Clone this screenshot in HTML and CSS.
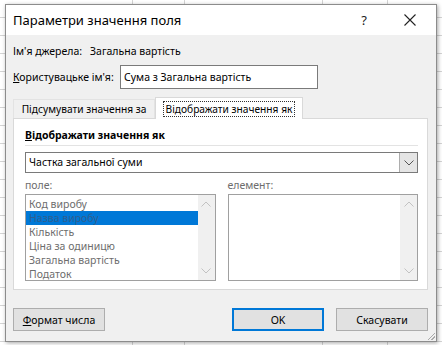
FILE: index.html
```html
<!DOCTYPE html>
<html lang="uk">
<head>
  <meta charset="UTF-8">
  <title>Параметри значення поля</title>
  <link rel="stylesheet" href="styles.css">
</head>
<body>
  <div class="dialog">
    <!-- Title bar -->
    <div class="titlebar">
      <span class="title">Параметри значення поля</span>
      <span class="help">?</span>
      <span class="close">
        <svg width="12" height="12" viewBox="0 0 12 12"><path d="M0.5 0.5 L11.5 11.5 M11.5 0.5 L0.5 11.5" stroke="#222" stroke-width="1.1" fill="none"/></svg>
      </span>
    </div>

    <div class="content">
      <div class="row source">
        <span class="label-src">Ім'я джерела:</span>
        <span>Загальна вартість</span>
      </div>

      <div class="row name">
        <span class="label-name"><u>К</u>ористувацьке ім'я:</span>
        <div class="textbox">Сума з Загальна вартість</div>
      </div>

      <!-- Tabs -->
      <div class="tabs">
        <div class="tab">Підсумувати значення за</div>
        <div class="tab active"><span class="focus">Відображати значення як</span></div>
      </div>

      <div class="panel">
        <div class="heading"><u>В</u>ідображати значення як</div>
        <div class="dropdown">
          <span class="dd-text">Частка загальної суми</span>
          <span class="dd-arrow">
            <svg width="10" height="6" viewBox="0 0 10 6"><path d="M0.5 0.5 L5 5 L9.5 0.5" stroke="#555" stroke-width="1" fill="none"/></svg>
          </span>
        </div>

        <div class="lists">
          <div class="col">
            <div class="caption">поле:</div>
            <div class="listbox">
              <div class="items">
                <div class="item">Код виробу</div>
                <div class="item selected">Назва виробу</div>
                <div class="item">Кількість</div>
                <div class="item">Ціна за одиницю</div>
                <div class="item">Загальна вартість</div>
                <div class="item">Податок</div>
              </div>
              <div class="scrollbar">
                <svg width="10" height="6" viewBox="0 0 10 6"><path d="M0.5 5.5 L5 1 L9.5 5.5" stroke="#c2c2c2" stroke-width="1" fill="none"/></svg>
                <svg width="10" height="6" viewBox="0 0 10 6"><path d="M0.5 0.5 L5 5 L9.5 0.5" stroke="#c2c2c2" stroke-width="1" fill="none"/></svg>
              </div>
            </div>
          </div>
          <div class="col">
            <div class="caption">елемент:</div>
            <div class="listbox">
              <div class="items"></div>
              <div class="scrollbar">
                <svg width="10" height="6" viewBox="0 0 10 6"><path d="M0.5 5.5 L5 1 L9.5 5.5" stroke="#c2c2c2" stroke-width="1" fill="none"/></svg>
                <svg width="10" height="6" viewBox="0 0 10 6"><path d="M0.5 0.5 L5 5 L9.5 0.5" stroke="#c2c2c2" stroke-width="1" fill="none"/></svg>
              </div>
            </div>
          </div>
        </div>
      </div>

      <!-- Buttons -->
      <div class="buttons">
        <button class="btn"><u>Ф</u>ормат числа</button>
        <span class="spacer"></span>
        <button class="btn ok">OK</button>
        <button class="btn">Скасувати</button>
      </div>
    </div>
    <span class="grip"></span>
  </div>
</body>
</html>
```

FILE: styles.css
```css
html, body {
  margin: 0;
  width: 442px;
  height: 345px;
  overflow: hidden;
}

body {
  font-family: "Noto Sans", "Open Sans", sans-serif;
  font-size: 10.5px;
  color: #000;
  background-color: #fff;
  background-image:
    linear-gradient(to right, transparent 132px, #d4d4d4 132px, #d4d4d4 133px, transparent 133px,
      transparent 184px, #d4d4d4 184px, #d4d4d4 185px, transparent 185px,
      transparent 322px, #d4d4d4 322px, #d4d4d4 323px, transparent 323px,
      transparent 387px, #d4d4d4 387px, #d4d4d4 388px, transparent 388px),
    repeating-linear-gradient(to bottom, transparent 0, transparent 17px, #d4d4d4 17px, #d4d4d4 18px);
  padding-top: 4px;
  box-sizing: border-box;
}

.dialog {
  position: relative;
  margin-left: 5px;
  width: 432px;
  height: 338px;
  box-sizing: border-box;
  border: 1px solid #8c8c8c;
  background: #f0f0f0;
  box-shadow: 1px 1px 4px rgba(0, 0, 0, 0.35);
}

.titlebar {
  height: 30px;
  background: #fff;
  display: flex;
  align-items: center;
  padding-left: 7px;
}

.title {
  font-size: 13px;
  flex: 1;
}

.help {
  font-size: 13px;
  width: 46px;
  text-align: center;
  color: #222;
}

.close {
  width: 46px;
  display: flex;
  justify-content: center;
  margin-right: 3px;
}

.content {
  padding: 0 8px 0 7px;
}

.row {
  display: flex;
  align-items: center;
}

.source {
  height: 20px;
  margin-top: 6px;
}

.label-src {
  width: 77px;
}

.name {
  height: 24px;
  margin-top: 4px;
}

.label-name {
  width: 107px;
}

.textbox {
  width: 198px;
  height: 24px;
  box-sizing: border-box;
  border: 1px solid #7a7a7a;
  background: #fff;
  padding-left: 3px;
  line-height: 22px;
}

.tabs {
  display: flex;
  align-items: flex-end;
  margin-top: 8px;
  height: 21px;
}

.tab {
  height: 19px;
  box-sizing: border-box;
  padding: 0;
  font-size: 10.2px;
  line-height: 18px;
  border: 1px solid #e3e3e3;
  border-bottom: none;
  width: 142px;
  text-align: center;
  white-space: nowrap;
}

.tab.active {
  height: 22px;
  width: 148px;
  background: #fff;
  border-color: #d9d9d9;
  margin-bottom: -1px;
  position: relative;
  z-index: 1;
  padding-top: 2px;
}

.focus {
  outline: 1px dotted #333;
  padding: 0 2px;
}

.panel {
  background: #fff;
  border: 1px solid #d9d9d9;
  height: 172px;
  box-sizing: border-box;
  padding: 0 9px 0 11px;
}

.heading {
  font-weight: bold;
  padding-top: 9px;
  height: 17px;
  border-bottom: 1px solid #e3e3e3;
}

.dropdown {
  margin-top: 6px;
  height: 21px;
  box-sizing: border-box;
  border: 1px solid #7a7a7a;
  display: flex;
  align-items: stretch;
}

.dd-text {
  flex: 1;
  padding-left: 3px;
  line-height: 19px;
}

.dd-arrow {
  width: 17px;
  background: #e5e5e5;
  border-left: 1px solid #adadad;
  display: flex;
  align-items: center;
  justify-content: center;
}

.lists {
  display: flex;
  gap: 12px;
  margin-top: 4px;
}

.col {
  flex: 1;
}

.caption {
  color: #6d6d6d;
  height: 17px;
  line-height: 17px;
}

.listbox {
  height: 87px;
  box-sizing: border-box;
  border: 1px solid #a0a0a0;
  display: flex;
}

.items {
  flex: 1;
  padding-top: 2px;
  color: #6d6d6d;
}

.item {
  height: 14px;
  line-height: 14px;
  padding-left: 3px;
}

.item.selected {
  background: #0078d7;
  color: #2f5f8f;
}

.scrollbar {
  width: 17px;
  background: #f0f0f0;
  display: flex;
  flex-direction: column;
  justify-content: space-between;
  align-items: center;
  padding: 6px 0;
  box-sizing: border-box;
}

.buttons {
  display: flex;
  gap: 12px;
  margin-top: 18px;
}

.spacer {
  flex: 1;
}

.btn {
  font-family: inherit;
  font-size: inherit;
  width: 92px;
  height: 23px;
  background: #e1e1e1;
  border: 1px solid #adadad;
  padding: 0;
  color: #000;
}

.btn.ok {
  border: 2px solid #0078d7;
}

.grip {
  position: absolute;
  right: 1px;
  bottom: 1px;
  width: 8px;
  height: 8px;
  background: linear-gradient(135deg, transparent 55%, #aaa 55%, #aaa 62%, transparent 62%, transparent 75%, #aaa 75%, #aaa 82%, transparent 82%);
}
```
